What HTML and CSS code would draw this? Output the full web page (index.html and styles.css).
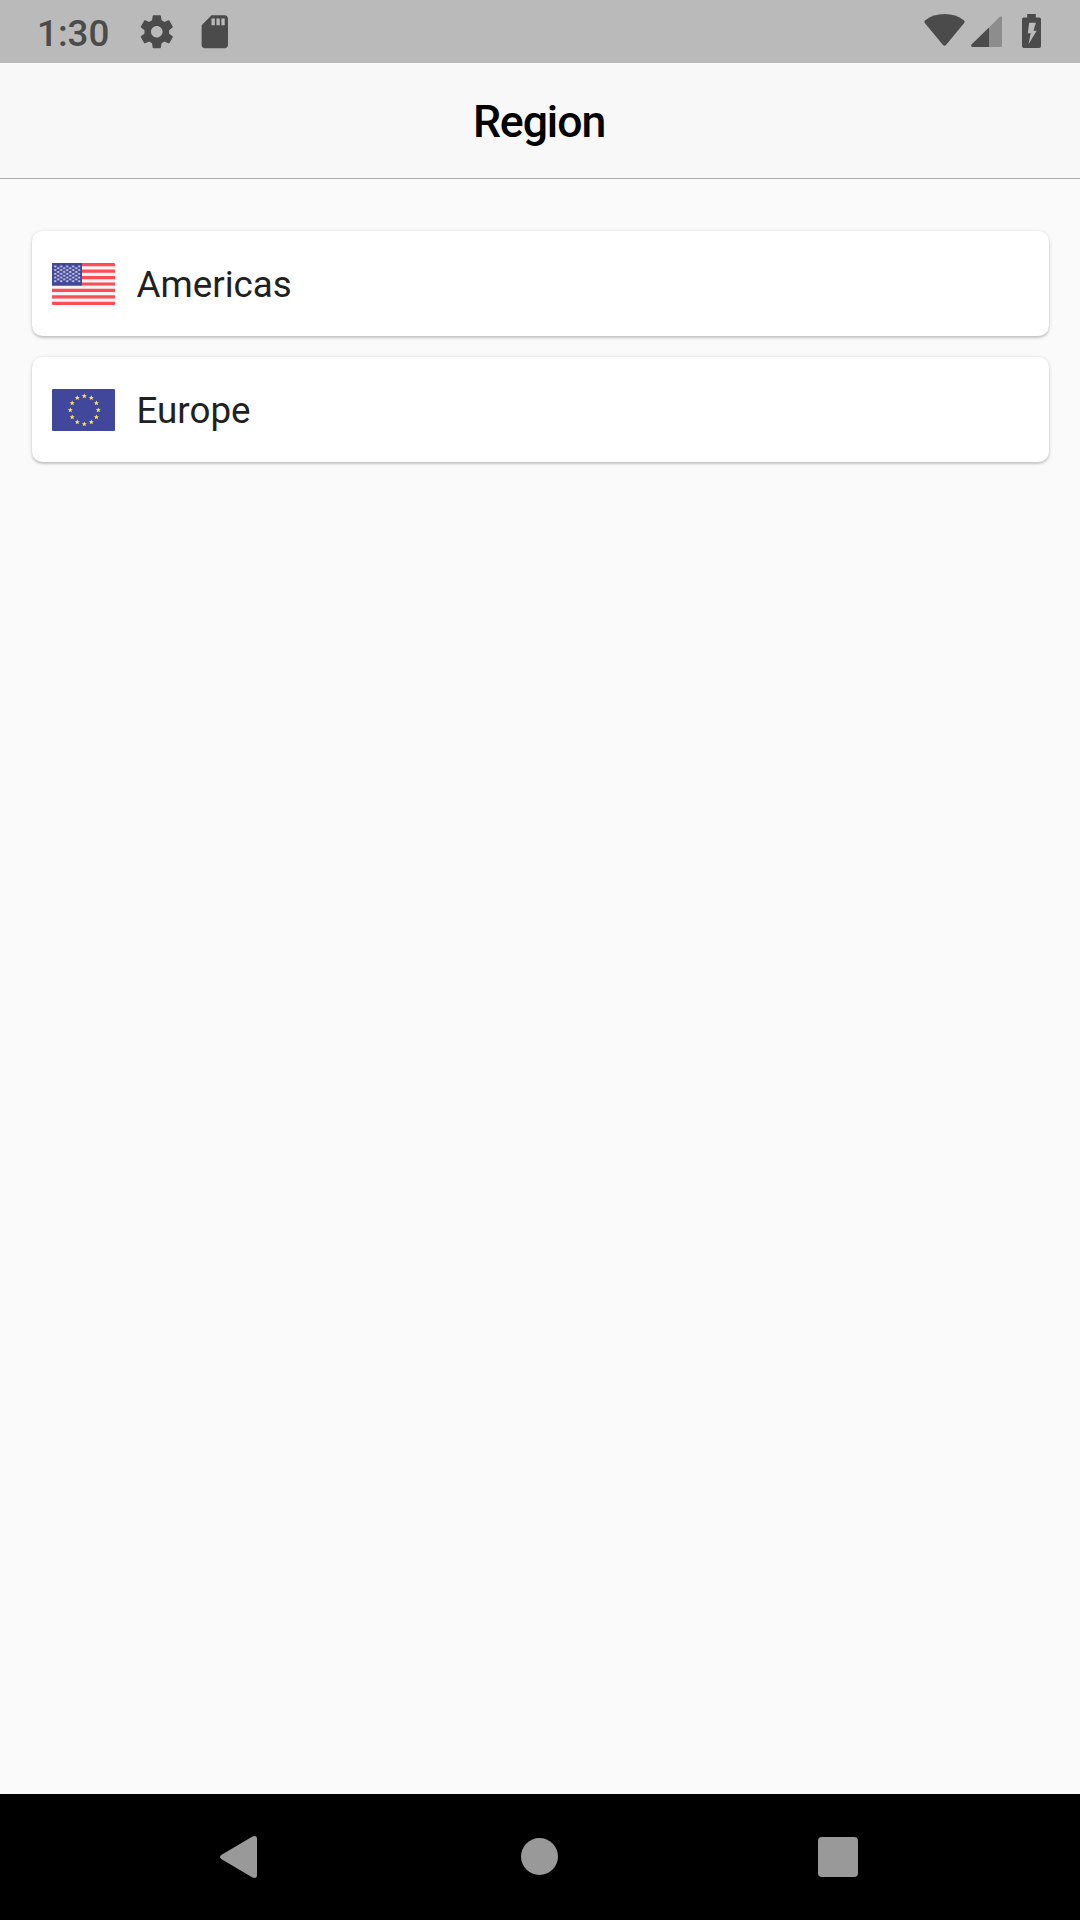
FILE: index.html
```html
<!DOCTYPE html>
<html lang="en">
<head>
    <meta charset="UTF-8" />
    <meta name="viewport" content="width=device-width, initial-scale=1.0" />
    <title>Region</title>
    <link rel="stylesheet" href="styles.css">
</head>
<body>
    <div class="status-bar">
        <span class="time">1:30</span>
        <svg class="icon-settings" viewBox="0 0 24 24">
            <path d="M19.43 12.98c.04-.32.07-.64.07-.98s-.03-.66-.07-.98l2.11-1.65c.19-.15.24-.42.12-.64l-2-3.46c-.12-.22-.39-.3-.61-.22l-2.49 1c-.52-.4-1.08-.73-1.69-.98l-.38-2.65C14.46 2.18 14.25 2 14 2h-4c-.25 0-.46.18-.49.42l-.38 2.65c-.61.25-1.17.59-1.69.98l-2.49-1c-.23-.09-.49 0-.61.22l-2 3.46c-.13.22-.07.49.12.64l2.11 1.65c-.04.32-.07.65-.07.98s.03.66.07.98l-2.11 1.65c-.19.15-.24.42-.12.64l2 3.46c.12.22.39.3.61.22l2.49-1c.52.4 1.08.73 1.69.98l.38 2.65c.03.24.24.42.49.42h4c.25 0 .46-.18.49-.42l.38-2.65c.61-.25 1.17-.59 1.69-.98l2.49 1c.23.09.49 0 .61-.22l2-3.46c.12-.22.07-.49-.12-.64l-2.11-1.65zM12 15.5c-1.93 0-3.5-1.57-3.5-3.5s1.57-3.5 3.5-3.5 3.5 1.57 3.5 3.5-1.57 3.5-3.5 3.5z" />
        </svg>
        <svg class="icon-sd" viewBox="0 0 24 24">
            <path d="M18 2h-8L4.02 8 4 20c0 1.1.9 2 2 2h12c1.1 0 2-.9 2-2V4c0-1.1-.9-2-2-2zm-6 6h-2V4h2v4zm3 0h-2V4h2v4zm3 0h-2V4h2v4z" />
        </svg>
        <div class="status-right">
            <svg class="icon-wifi" viewBox="0 0 41 32">
                <path d="M1.200 6.200C6.500 2.200 13 0 20.500 0S34.500 2.200 39.800 6.200Q41.300 7.400 40.200 9L22 31Q20.500 32.600 19 31L.8 9Q-.3 7.400 1.200 6.200z" />
            </svg>
            <svg class="icon-signal" viewBox="0 0 31 31">
                <path class="faded" d="M18 11.500L28.700.7Q31-.8 31 2V29.500Q31 31 29.500 31H18z" />
                <path d="M18 11.500V31H1.500Q-.9 30.500.5 28.600z" />
            </svg>
            <svg class="icon-battery" viewBox="0 0 19 34">
                <path fill-rule="evenodd" d="M5.200 0h8.600v3.400h3.400q1.800 0 1.800 1.800v27q0 1.800-1.800 1.800H1.800Q0 34 0 32.200v-27Q0 3.400 1.800 3.400h3.400zM7.200 8.700L5.700 19.300h3L6.500 30.300 14.700 16.700h-3.200L13.900 8.700z" />
            </svg>
        </div>
    </div>

    <div class="header">
        <h1 class="title">Region</h1>
    </div>

    <div class="regions">
        <div class="card">
            <svg class="flag" viewBox="0 0 63 42">
                <defs>
                    <pattern id="stars" x="1.500" y="1.600" width="6" height="3.700" patternUnits="userSpaceOnUse">
                        <rect x=".7" y="1" width="1.900" height="1.600" />
                    </pattern>
                    <pattern id="stars-odd" x="4.500" y="3.450" width="6" height="3.700" patternUnits="userSpaceOnUse">
                        <rect x=".7" y="1" width="1.900" height="1.600" />
                    </pattern>
                    <clipPath id="flag-shape"><rect width="63" height="42" rx="1" /></clipPath>
                </defs>
                <g clip-path="url(#flag-shape)">
                    <rect class="white" width="63" height="42" />
                    <path class="stripes" d="M0 1.615H63M0 8.077H63M0 14.538H63M0 21H63M0 27.462H63M0 33.923H63M0 40.385H63" />
                    <rect class="blue" width="30" height="22.600" />
                    <rect x="1.500" y="1.600" width="27" height="18.500" fill="url(#stars)" />
                    <rect x="4.500" y="3.450" width="22" height="14.800" fill="url(#stars-odd)" />
                </g>
            </svg>
            <span class="name">Americas</span>
        </div>
        <div class="card">
            <svg class="flag" viewBox="0 0 63 42">
                <defs>
                    <path id="star" d="M0-2.600L.75-.8 2.500-.75 1.100.45 1.600 2.200 0 1.200-1.600 2.200-1.100.45-2.500-.75-.75-.8z" />
                </defs>
                <rect class="blue" width="63" height="42" rx="1" />
                <g class="gold">
                    <use href="#star" x="32.300" y="7" />
                    <use href="#star" x="39.300" y="8.900" />
                    <use href="#star" x="44.400" y="14" />
                    <use href="#star" x="46.300" y="21" />
                    <use href="#star" x="44.400" y="28" />
                    <use href="#star" x="39.300" y="33.100" />
                    <use href="#star" x="32.300" y="35" />
                    <use href="#star" x="25.300" y="33.100" />
                    <use href="#star" x="20.200" y="28" />
                    <use href="#star" x="18.300" y="21" />
                    <use href="#star" x="20.200" y="14" />
                    <use href="#star" x="25.300" y="8.900" />
                </g>
            </svg>
            <span class="name">Europe</span>
        </div>
    </div>

    <div class="nav-bar">
        <svg class="nav-back" viewBox="0 0 37 42">
            <path d="M1.200 19L32.500.5Q37-1 37 3V39Q37 43 32.500 41.500L1.200 23Q-1.200 21 1.200 19z" />
        </svg>
        <div class="nav-home"></div>
        <div class="nav-recent"></div>
    </div>
</body>
</html>
```

FILE: styles.css
```css
* {
    box-sizing: border-box;
}

body {
    display: flex;
    flex-direction: column;
    height: 1920px;
    margin: 0;
    font-family: Roboto, sans-serif;
    background: #fafafa;
    overflow: hidden;
}

svg {
    display: block;
    flex: none;
}

/* status bar */
.status-bar {
    display: flex;
    align-items: flex-start;
    height: 63px;
    padding: 0 39px 0 37px;
    background: #bababa;
    color: #4b4b4b;
    fill: #4b4b4b;
}

.time {
    width: 100.300px;
    padding-top: 12px;
    font-size: 36.75px;
    line-height: 44px;
    font-weight: 500;
}

.icon-settings,
.icon-sd {
    width: 39.6px;
    height: 39.6px;
    margin-top: 11.7px;
}

.icon-sd {
    margin-left: 18.5px;
}

.status-right {
    display: flex;
    margin-left: auto;
    padding-top: 14px;
}

.icon-wifi {
    width: 41px;
    height: 32px;
}

.icon-signal {
    width: 31px;
    height: 31px;
    margin: 2px 20px 0 6px;
}

.icon-battery {
    width: 19px;
    height: 34px;
}

.faded {
    fill: #8d8d8d;
}

/* header */
.header {
    display: flex;
    align-items: center;
    justify-content: center;
    height: 116px;
    padding: 2px 2px 0 0;
    background: #f8f8f8;
    border-bottom: 1px solid #acacac;
}

.title {
    margin: 0;
    font-size: 44.6px;
    line-height: 52px;
    font-weight: 500;
    letter-spacing: -1.08px;
    color: #000;
}

/* region list */
.regions {
    display: flex;
    flex: 1;
    flex-direction: column;
    gap: 21px;
    padding: 52px 31.5px 0;
}

.card {
    display: flex;
    align-items: center;
    height: 105px;
    padding-left: 20.5px;
    border-radius: 10.5px;
    background: #fff;
    box-shadow: 0 2px 2px rgba(0, 0, 0, 0.12), 0 1px 4px rgba(0, 0, 0, 0.16);
}

.flag {
    width: 63px;
    height: 42px;
    margin-right: 21.5px;
}

.name {
    padding-top: 2px;
    font-size: 36.75px;
    line-height: 44px;
    color: #212121;
}

.white {
    fill: #f5f5f5;
}

.blue {
    fill: #41479b;
}

.stripes {
    stroke: #ff4b55;
    stroke-width: 3.231;
}

pattern rect {
    fill: #f5f5f5;
}

.gold {
    fill: #ffe15a;
}

/* navigation bar */
.nav-bar {
    display: flex;
    align-items: center;
    height: 126px;
    padding-left: 220px;
    background: #000;
    fill: #999;
}

.nav-back {
    width: 37px;
    height: 42px;
}

.nav-home {
    width: 37px;
    height: 37px;
    margin: 0 260px 1px 264px;
    border-radius: 50%;
    background: #999;
}

.nav-recent {
    width: 40px;
    height: 40px;
    border-radius: 4px;
    background: #999;
}
```
